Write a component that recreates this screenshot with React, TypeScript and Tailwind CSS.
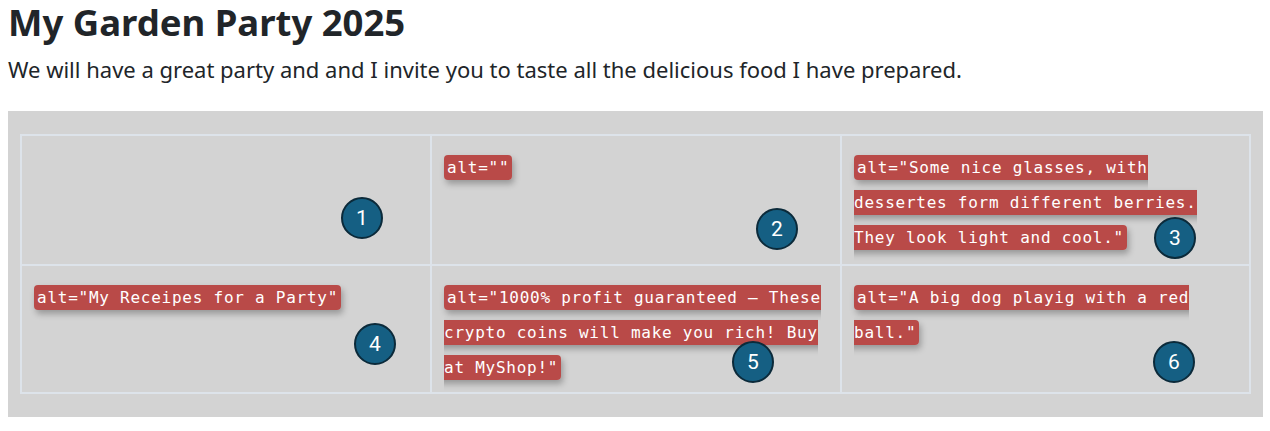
import React from "react";

type Cell = { alt: string | null; badge: number; bx: number; by: number };

const cells: Cell[] = [
  { alt: null, badge: 1, bx: 319, by: 61 },
  { alt: 'alt=""', badge: 2, bx: 324, by: 72 },
  { alt: 'alt="Some nice glasses, with dessertes form different berries. They look light and cool."', badge: 3, bx: 312, by: 81 },
  { alt: 'alt="My Receipes for a Party"', badge: 4, bx: 332, by: 57 },
  { alt: 'alt="1000% profit guaranteed – These crypto coins will make you rich! Buy at MyShop!"', badge: 5, bx: 300, by: 75 },
  { alt: 'alt="A big dog playig with a red ball."', badge: 6, bx: 311, by: 75 },
];

export default function App() {
  return (
    <div className="bg-white text-[#212529] font-['Noto_Sans',sans-serif] w-[1270px] h-[431px] overflow-hidden">
      <h1 className="mx-2 text-[36.5px] leading-[44px] font-bold">My Garden Party 2025</h1>
      <p className="mx-2 mt-[10px] text-[22px] leading-[30px]">
        We will have a great party and and I invite you to taste all the delicious food I have prepared.
      </p>
      <div className="mx-2 mt-[27px] w-[1255px] h-[306px] bg-[#d3d3d3] pt-[23px] pl-[12px]">
        <div className="grid grid-cols-[408px_408px_407px] grid-rows-[128px_126px] gap-[2px] p-[2px] w-[1231px] bg-[#dde3ea]">
          {cells.map((c) => (
            <div key={c.badge} className="relative bg-[#d3d3d3] pl-[12px] pr-[12px] pt-[14px] leading-[35px]">
              {c.alt && (
                <span className="bg-[#b94a48] text-white rounded-[4px] px-[3px] py-[3px] font-['DejaVu_Sans_Mono',monospace] text-[16px] tracking-[0.75px] shadow-[2px_4px_6px_rgba(0,0,0,0.28)]">
                  {c.alt}
                </span>
              )}
              <div
                className="absolute w-[42px] h-[42px] rounded-full bg-[#155f83] border-2 border-[#0b2a3a] flex items-center justify-center text-white text-[21px] font-['Roboto',sans-serif]"
                style={{ left: c.bx, top: c.by }}
              >
                {c.badge}
              </div>
            </div>
          ))}
        </div>
      </div>
    </div>
  );
}
